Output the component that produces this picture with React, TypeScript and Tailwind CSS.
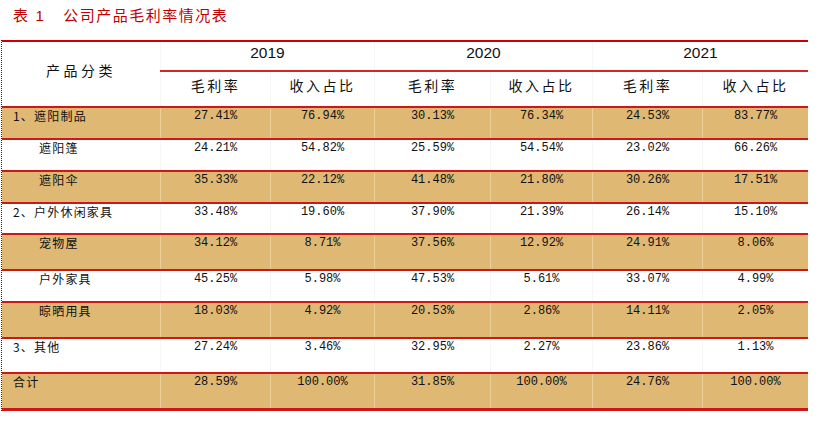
import React from 'react';

type Row = {
  name: string;
  indent?: boolean;
  tan?: boolean;
  h: string;
  vals: string[];
};

const rows: Row[] = [
  { name: '1、遮阳制品', tan: true, h: 'h-[32px]', vals: ['27.41%', '76.94%', '30.13%', '76.34%', '24.53%', '83.77%'] },
  { name: '遮阳篷', indent: true, h: 'h-[32px]', vals: ['24.21%', '54.82%', '25.59%', '54.54%', '23.02%', '66.26%'] },
  { name: '遮阳伞', indent: true, tan: true, h: 'h-[32px]', vals: ['35.33%', '22.12%', '41.48%', '21.80%', '30.26%', '17.51%'] },
  { name: '2、户外休闲家具', h: 'h-[31px]', vals: ['33.48%', '19.60%', '37.90%', '21.39%', '26.14%', '15.10%'] },
  { name: '宠物屋', indent: true, tan: true, h: 'h-[36px]', vals: ['34.12%', '8.71%', '37.56%', '12.92%', '24.91%', '8.06%'] },
  { name: '户外家具', indent: true, h: 'h-[32px]', vals: ['45.25%', '5.98%', '47.53%', '5.61%', '33.07%', '4.99%'] },
  { name: '晾晒用具', indent: true, tan: true, h: 'h-[36px]', vals: ['18.03%', '4.92%', '20.53%', '2.86%', '14.11%', '2.05%'] },
  { name: '3、其他', h: 'h-[35px]', vals: ['27.24%', '3.46%', '32.95%', '2.27%', '23.86%', '1.13%'] },
  { name: '合计', tan: true, h: 'h-[39px]', vals: ['28.59%', '100.00%', '31.85%', '100.00%', '24.76%', '100.00%'] },
];

const cjk = "font-['Noto_Sans_CJK_SC',sans-serif]";
const mono = "font-['Liberation_Mono','Noto_Sans_CJK_SC',monospace]";
const grid = 'grid grid-cols-[158px_110px_104px_116px_102px_110px_106px]';

export default function App() {
  const years = ['2019', '2020', '2021'];
  return (
    <div className="w-[821px] h-[428px] bg-white overflow-hidden">
      <div className={`${cjk} pt-[5px] pl-[13px] h-[40px] text-[15px] leading-[20px] tracking-[1.5px] text-[#c00000]`}>
        <span>表</span>
        <span className="ml-[6px] font-['Liberation_Sans',sans-serif]">1</span>
        <span className="ml-[18px]">公司产品毛利率情况表</span>
      </div>

      <div className="ml-px w-[807px] border-l border-dotted border-[#222]">
        {/* header */}
        <div className="grid grid-cols-[158px_648px] h-[66px] border-t-2 border-[#cc0000]">
          <div className={`${cjk} flex items-center justify-center pb-[8px] text-[14px] tracking-[3.5px] text-[#111]`}>
            产品分类
          </div>
          <div className="flex flex-col">
            <div className="grid grid-cols-[214px_218px_216px] h-[30px] border-b-2 border-[#d42626]">
              {years.map((y) => (
                <div
                  key={y}
                  className="border-l border-[#f6f6f6] text-center pt-[1px] font-['Liberation_Sans',sans-serif] text-[15.5px] leading-[20px] text-[#111]"
                >
                  {y}
                </div>
              ))}
            </div>
            <div className="grid grid-cols-[110px_104px_116px_102px_110px_106px] flex-1">
              {years.flatMap((y) =>
                ['毛利率', '收入占比'].map((t) => (
                  <div
                    key={y + t}
                    className={`${cjk} border-l border-[#f6f6f6] text-center pt-[3px] text-[14px] leading-[20px] tracking-[2.5px] text-[#111]`}
                  >
                    {t}
                  </div>
                )),
              )}
            </div>
          </div>
        </div>

        {/* body */}
        {rows.map((r, i) => (
          <div
            key={r.name}
            className={`${grid} ${r.h} border-t-2 border-[#cc1818] ${r.tan ? 'bg-[#dfb873]' : 'bg-white'} ${
              i === rows.length - 1 ? 'border-b-[3px]' : ''
            }`}
          >
            <div
              className={`${cjk} text-[12px] leading-[16px] tracking-[1.2px] text-[#111] ${
                r.indent ? 'pl-[37px]' : 'pl-[11px]'
              }`}
            >
              {r.name}
            </div>
            {r.vals.map((v, j) => (
              <div
                key={j}
                className={`${mono} border-l ${r.tan ? 'border-[#ecd09a]' : 'border-[#f7f7f7]'} text-center text-[12px] leading-[16px] text-[#111]`}
              >
                {v}
              </div>
            ))}
          </div>
        ))}
      </div>
    </div>
  );
}
